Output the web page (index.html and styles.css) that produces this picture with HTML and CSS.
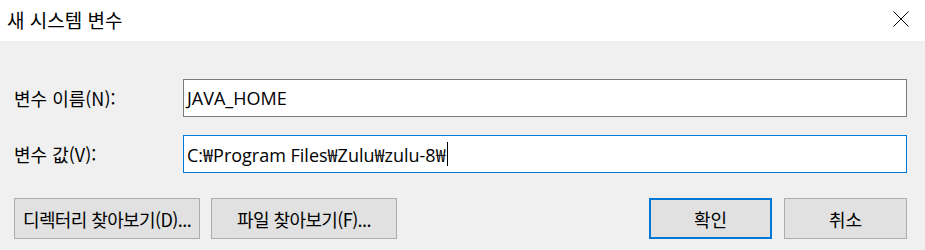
FILE: index.html
```html
<!DOCTYPE html>
<html lang="ko">
<head>
    <meta charset="UTF-8">
    <title>새 시스템 변수</title>
    <link rel="stylesheet" href="styles.css">
</head>
<body>
    <div class="dialog">
        <!-- Title bar -->
        <div class="titlebar">
            <span class="title">새 시스템 변수</span>
            <svg class="close" width="16" height="16" viewBox="0 0 16 16">
                <path d="M0.5 0.5 L15.5 15.5 M15.5 0.5 L0.5 15.5" stroke="#000" stroke-width="1" fill="none"/>
            </svg>
        </div>
        <div class="content">
            <div class="field">
                <label for="var-name">변수 이름(N):</label>
                <div class="input" id="var-name">JAVA_HOME</div>
            </div>
            <div class="field">
                <label for="var-value">변수 값(V):</label>
                <div class="input focused" id="var-value">C:₩Program Files₩Zulu₩zulu-8₩<span class="caret"></span></div>
            </div>
            <div class="buttons">
                <div class="left">
                    <button class="btn wide">디렉터리 찾아보기(D)...</button>
                    <button class="btn wide">파일 찾아보기(F)...</button>
                </div>
                <div class="right">
                    <button class="btn default">확인</button>
                    <button class="btn">취소</button>
                </div>
            </div>
        </div>
    </div>
</body>
</html>
```

FILE: styles.css
```css
body {
    margin: 0;
    font-family: "Open Sans", "Noto Sans CJK KR", sans-serif;
    font-size: 18px;
    color: #000;
    background-color: #f0f0f0;
}

.dialog {
    width: 925px;
    height: 250px;
    display: flex;
    flex-direction: column;
}

.titlebar {
    height: 41px;
    background-color: #fff;
    display: flex;
    align-items: center;
    justify-content: space-between;
    padding: 0 16px 0 7px;
    box-sizing: border-box;
}

.title {
    font-family: "Noto Sans CJK KR", sans-serif;
    font-size: 19px;
    margin-top: -2px;
}

.close {
    margin-top: -4px;
}

.content {
    flex: 1;
    padding: 38px 18px 0 14px;
    background-color: #f0f0f0;
}

.field {
    display: flex;
    align-items: center;
    margin-bottom: 18px;
}

label {
    width: 169px;
    flex-shrink: 0;
    font-family: "Noto Sans CJK KR", sans-serif;
}

.input {
    flex: 1;
    height: 38px;
    box-sizing: border-box;
    border: 1px solid #7a7a7a;
    background-color: #fff;
    padding: 0 3px;
    display: flex;
    align-items: center;
    white-space: pre;
}

.input.focused {
    border-color: #0078d7;
}

.caret {
    display: inline-block;
    width: 1px;
    height: 24px;
    background-color: #000;
    margin-left: 1px;
}

.buttons {
    display: flex;
    justify-content: space-between;
    margin-top: 25px;
}

.left, .right {
    display: flex;
    gap: 11px;
}

.right {
    gap: 12px;
}

.btn {
    height: 41px;
    width: 123px;
    background-color: #e1e1e1;
    border: 1px solid #adadad;
    font-family: "Noto Sans CJK KR", sans-serif;
    font-size: 18px;
    color: #000;
    padding: 0;
    white-space: nowrap;
}

.btn.wide {
    width: 186px;
    letter-spacing: -0.6px;
}

.btn.default {
    border: 2px solid #0078d7;
}
```
